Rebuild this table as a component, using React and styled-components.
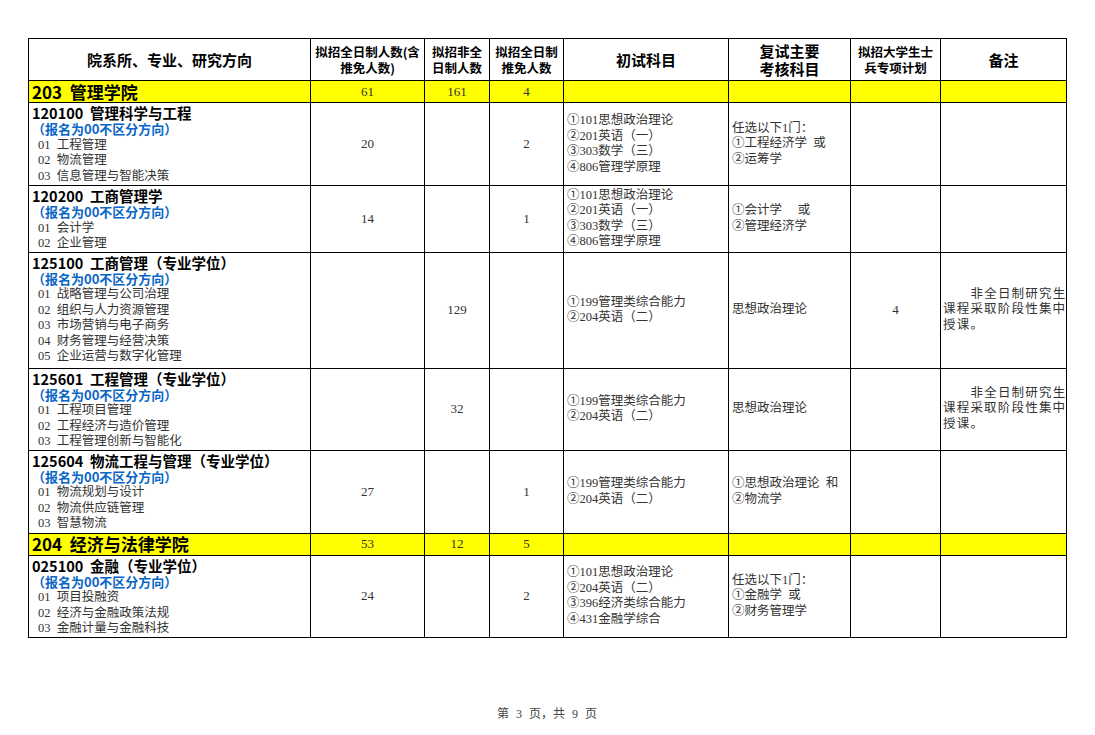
import React from "react";
import styled, { createGlobalStyle } from "styled-components";

const SERIF = `"Liberation Serif", "Noto Sans CJK SC", serif`;
const SANS = `"Noto Sans CJK SC", "Liberation Sans", sans-serif`;

const GlobalStyle = createGlobalStyle`
  html, body {
    margin: 0;
    padding: 0;
    background: #ffffff;
  }
`;

const rows = [
  { type: "section", name: "203  管理学院", a: "61", b: "161", c: "4" },
  {
    type: "major",
    h: 83,
    title: "120100  管理科学与工程",
    dirs: ["01  工程管理", "02  物流管理", "03  信息管理与智能决策"],
    a: "20",
    b: "",
    c: "2",
    first: ["①101思想政治理论", "②201英语（一）", "③303数学（三）", "④806管理学原理"],
    retest: ["任选以下1门：", "①工程经济学  或", "②运筹学"],
    soldier: "",
  },
  {
    type: "major",
    h: 66,
    title: "120200  工商管理学",
    dirs: ["01  会计学", "02  企业管理"],
    a: "14",
    b: "",
    c: "1",
    first: ["①101思想政治理论", "②201英语（一）", "③303数学（三）", "④806管理学原理"],
    retest: ["①会计学　 或", "②管理经济学"],
    soldier: "",
  },
  {
    type: "major",
    h: 116,
    title: "125100  工商管理（专业学位）",
    dirs: [
      "01  战略管理与公司治理",
      "02  组织与人力资源管理",
      "03  市场营销与电子商务",
      "04  财务管理与经营决策",
      "05  企业运营与数字化管理",
    ],
    a: "",
    b: "129",
    c: "",
    first: ["①199管理类综合能力", "②204英语（二）"],
    retest: ["思想政治理论"],
    soldier: "4",
    note: true,
  },
  {
    type: "major",
    h: 82,
    title: "125601  工程管理（专业学位）",
    dirs: ["01  工程项目管理", "02  工程经济与造价管理", "03  工程管理创新与智能化"],
    a: "",
    b: "32",
    c: "",
    first: ["①199管理类综合能力", "②204英语（二）"],
    retest: ["思想政治理论"],
    soldier: "",
    note: true,
  },
  {
    type: "major",
    h: 83,
    title: "125604  物流工程与管理（专业学位）",
    dirs: ["01  物流规划与设计", "02  物流供应链管理", "03  智慧物流"],
    a: "27",
    b: "",
    c: "1",
    first: ["①199管理类综合能力", "②204英语（二）"],
    retest: ["①思想政治理论  和", "②物流学"],
    soldier: "",
  },
  { type: "section", name: "204  经济与法律学院", a: "53", b: "12", c: "5" },
  {
    type: "major",
    h: 82,
    title: "025100  金融（专业学位）",
    dirs: ["01  项目投融资", "02  经济与金融政策法规", "03  金融计量与金融科技"],
    a: "24",
    b: "",
    c: "2",
    first: ["①101思想政治理论", "②204英语（二）", "③396经济类综合能力", "④431金融学综合"],
    retest: ["任选以下1门：", "①金融学  或", "②财务管理学"],
    soldier: "",
  },
];

const widths = [282, 114, 65, 74, 165, 122, 90, 126];

function App() {
  return (
    <Page>
      <GlobalStyle />
      <Sheet>
        <colgroup>
          {widths.map((w, i) => (
            <col key={i} style={{ width: w }} />
          ))}
        </colgroup>
        <thead>
          <HeadRow>
            <HeadCell $size={15}>院系所、专业、研究方向</HeadCell>
            <HeadCell $size={12.5}>
              拟招全日制人数(含
              <br />
              推免人数)
            </HeadCell>
            <HeadCell $size={12.5}>
              拟招非全
              <br />
              日制人数
            </HeadCell>
            <HeadCell $size={12.5}>
              拟招全日制
              <br />
              推免人数
            </HeadCell>
            <HeadCell $size={15}>初试科目</HeadCell>
            <HeadCell $size={15}>
              复试主要
              <br />
              考核科目
            </HeadCell>
            <HeadCell $size={12.5}>
              拟招大学生士
              <br />
              兵专项计划
            </HeadCell>
            <HeadCell $size={15}>备注</HeadCell>
          </HeadRow>
        </thead>
        <tbody>
          {rows.map((r, i) =>
            r.type === "section" ? (
              <SectionRow key={i}>
                <SectionName>{r.name}</SectionName>
                <NumCell>{r.a}</NumCell>
                <NumCell>{r.b}</NumCell>
                <NumCell>{r.c}</NumCell>
                <NumCell />
                <NumCell />
                <NumCell />
                <NumCell />
              </SectionRow>
            ) : (
              <MajorRow key={i} $h={r.h}>
                <MajorCell>
                  <MajorTitle>{r.title}</MajorTitle>
                  <Notice>（报名为00不区分方向）</Notice>
                  {r.dirs.map((d) => (
                    <Direction key={d}>{d}</Direction>
                  ))}
                </MajorCell>
                <NumCell>{r.a}</NumCell>
                <NumCell>{r.b}</NumCell>
                <NumCell>{r.c}</NumCell>
                <TextCell>
                  {r.first.map((t) => (
                    <Line key={t}>{t}</Line>
                  ))}
                </TextCell>
                <TextCell>
                  {r.retest.map((t) => (
                    <Line key={t}>{t}</Line>
                  ))}
                </TextCell>
                <NumCell>{r.soldier}</NumCell>
                <NoteCell>
                  {r.note && (
                    <>
                      <NoteLine $indent>非全日制研究生</NoteLine>
                      <NoteLine>课程采取阶段性集中</NoteLine>
                      <NoteLine>授课。</NoteLine>
                    </>
                  )}
                </NoteCell>
              </MajorRow>
            )
          )}
        </tbody>
      </Sheet>
      <Footer>第 3 页，共 9 页</Footer>
    </Page>
  );
}

const Page = styled.div`
  width: 1095px;
  height: 735px;
  box-sizing: border-box;
  padding: 38px 0 0 28px;
  background: #fff;
  overflow: hidden;
`;

const Sheet = styled.table`
  width: 1038px;
  table-layout: fixed;
  border-collapse: collapse;
  border: 1.5px solid #000;

  td,
  th {
    border: 1px solid #000;
    padding: 0;
    box-sizing: border-box;
  }
`;

const HeadRow = styled.tr`
  height: 42px;
`;

const HeadCell = styled.th`
  font-family: ${SANS};
  font-weight: 700;
  font-size: ${(p) => p.$size}px;
  line-height: ${(p) => (p.$size > 14 ? 18 : 16)}px;
  color: #000;
  text-align: center;
  vertical-align: middle;
  white-space: nowrap;
  overflow: hidden;
`;

const SectionRow = styled.tr`
  height: 22px;
  background: #ffff00;
`;

const SectionName = styled.td`
  font-family: ${SANS};
  font-weight: 700;
  font-size: 17px;
  line-height: 20px;
  color: #000;
  padding-left: 3px !important;
  white-space: pre;
  vertical-align: middle;
`;

const MajorRow = styled.tr`
  height: ${(p) => p.$h}px;
`;

const MajorCell = styled.td`
  vertical-align: top;
  padding: 1px 0 0 3px !important;
`;

const MajorTitle = styled.div`
  font-family: ${SANS};
  font-weight: 700;
  font-size: 14.5px;
  line-height: 17px;
  color: #000;
  white-space: pre;
`;

const Notice = styled.div`
  font-family: ${SANS};
  font-weight: 700;
  font-size: 13px;
  line-height: 16.5px;
  color: #0a66c6;
  white-space: pre;
`;

const Direction = styled.div`
  font-family: ${SERIF};
  font-size: 12.5px;
  line-height: 15.5px;
  color: #333;
  padding-left: 6px;
  white-space: pre;
`;

const NumCell = styled.td`
  font-family: ${SERIF};
  font-size: 13px;
  color: #333;
  text-align: center;
  vertical-align: middle;
`;

const TextCell = styled.td`
  vertical-align: middle;
  padding-left: 3px !important;
`;

const Line = styled.div`
  font-family: ${SERIF};
  font-size: 12.5px;
  line-height: 15.5px;
  color: #333;
  white-space: pre;
`;

const NoteCell = styled.td`
  vertical-align: middle;
  padding-left: 2px !important;
`;

const NoteLine = styled.div`
  font-family: ${SERIF};
  font-size: 12.5px;
  line-height: 15.5px;
  letter-spacing: 1.2px;
  color: #333;
  white-space: nowrap;
  text-indent: ${(p) => (p.$indent ? "2.2em" : "0")};
`;

const Footer = styled.div`
  width: 1038px;
  margin-top: 66px;
  text-align: center;
  font-family: ${SERIF};
  font-size: 12px;
  color: #444;
  word-spacing: 4px;
`;

export default App;
